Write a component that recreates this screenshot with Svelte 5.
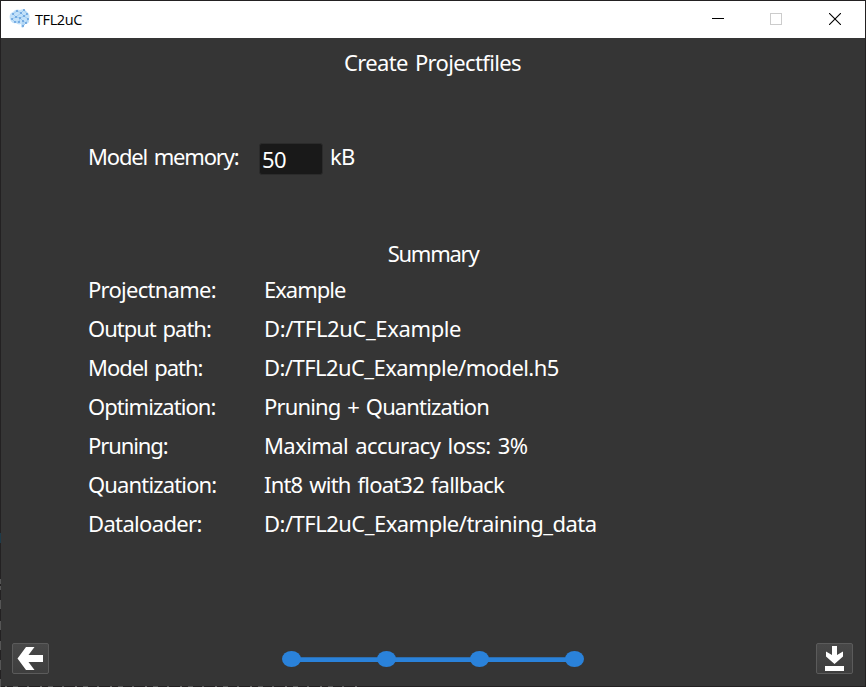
<script>
  const rows = [
    { label: 'Projectname:', value: 'Example', ls: -0.73, vs: -1 },
    { label: 'Output path:', value: 'D:/TFL2uC_Example', ls: -1, vs: -0.38 },
    { label: 'Model path:', value: 'D:/TFL2uC_Example/model.h5', ls: -1.05, vs: -0.56 },
    { label: 'Optimization:', value: 'Pruning + Quantization', ls: -0.95, vs: -0.86 },
    { label: 'Pruning:', value: 'Maximal accuracy loss: 3%', ls: -1.1, vs: -0.58 },
    { label: 'Quantization:', value: 'Int8 with float32 fallback', ls: -0.85, vs: -0.8 },
    { label: 'Dataloader:', value: 'D:/TFL2uC_Example/training_data', ls: -0.65, vs: -0.52 }
  ];
  const steps = [21.5, 116.5, 209.5, 304.5];
  const nodes = [
    [4, 6], [8, 3], [12, 5], [15, 2], [18, 6], [3, 11], [7, 9], [11, 10],
    [15, 8], [19, 11], [6, 14], [10, 14], [14, 13], [17, 15], [14, 18]
  ];
</script>

<div class="window">
  <header>
    <svg class="brain" width="22" height="22" viewBox="0 0 22 22">
      <path d="M1 11C0 8 1 5 4 4C6 1 9 1 11 2C14 0 17 2 18 4C21 6 21 9 20 11C21 14 19 16 16 16L14 20L12 19L12 16C10 17 8 16 7 15C4 16 2 14 1 11Z" fill="#c3e1f9" />
      <path d="M4 6L8 3L12 5L15 2L18 6L15 8L12 5L7 9L3 11L6 14L10 14L11 10L15 8L19 11L17 15L14 13L11 10L7 9L4 6M14 13L14 18L17 15" fill="none" stroke="#8fc3ee" stroke-width=".7" />
      {#each nodes as [x, y]}
        <circle cx={x} cy={y} r="1" fill="#659fdd" />
      {/each}
    </svg>
    <span class="title">TFL2uC</span>
    <div class="controls">
      <svg width="12" height="12" viewBox="0 0 12 12"><path d="M0 5.5H12" stroke="#000" /></svg>
      <svg width="12" height="12" viewBox="0 0 12 12"><rect x=".5" y=".5" width="11" height="11" fill="none" stroke="#ccc" /></svg>
      <svg class="close" width="12" height="12" viewBox="0 0 12 12"><path d="M0 0L12 12M12 0L0 12" stroke="#000" stroke-width="1.1" /></svg>
    </div>
  </header>

  <main>
    <h1>Create Projectfiles</h1>
    <div class="memory">
      <label for="mem">Model memory:</label>
      <input id="mem" value="50" />
      <span class="unit">kB</span>
    </div>
    <h2>Summary</h2>
    <div class="rows">
      {#each rows as r}
        <div class="row">
          <span class="label"><span style="letter-spacing:{r.ls}px">{r.label}</span></span>
          <span style="letter-spacing:{r.vs}px">{r.value}</span>
        </div>
      {/each}
    </div>
  </main>

  <footer>
    <button aria-label="Back">
      <svg width="36" height="30" viewBox="0 0 36 30"><path d="M4.5 14.5L13 3H21.500L15.500 11H30V18H15.500L21.500 26H13Z" fill="#fff" /></svg>
    </button>
    <svg class="steps" width="326" height="32" viewBox="0 0 326 32">
      <path d="M21.500 16.700H304.500" stroke="#2a82da" stroke-width="4.700" />
      {#each steps as x}
        <ellipse cx={x} cy="16" rx="9.500" ry="8" fill="#2a82da" />
      {/each}
    </svg>
    <button aria-label="Save">
      <svg width="36" height="30" viewBox="0 0 36 30"><path d="M15 2H20V11L26 7.500V12.500L17.500 20L9 12.500V7.500L15 11ZM8 22H27V27H8Z" fill="#fff" /></svg>
    </button>
  </footer>
</div>

<style>
  .window {
    position: relative;
    box-sizing: border-box;
    width: 866px;
    height: 687px;
    border: 1px solid #232122;
    background: #353535;
    color: #fff;
    font: 22px/30px "Noto Sans", sans-serif;
    word-spacing: 2px;
    font-variant-ligatures: none;
    display: flex;
    flex-direction: column;
    white-space: nowrap;
  }
  /* slivers of the desktop behind the window frame */
  .window::before {
    content: "";
    position: absolute;
    left: -1px;
    top: 532px;
    width: 1px;
    height: 154px;
    background: linear-gradient(#1d3b4a 0 10px, transparent 10px 46px, #555 46px 51px, transparent 51px 53px, #555 53px 57px, transparent 57px 67px, #555 67px 76px, transparent 76px 88px, #555 88px 97px, transparent 97px 108px, #555 108px 117px, transparent 117px 127px, #555 127px 137px, transparent 137px 146px, #555 146px);
  }
  .window::after {
    content: "";
    position: absolute;
    left: 4px;
    bottom: -1px;
    width: 354px;
    height: 1px;
    background: repeating-linear-gradient(90deg, #666 0 2px, transparent 2px 8px, #555 8px 13px, transparent 13px 22px, #5c5c5c 22px 24px, transparent 24px 35px);
  }
  header {
    height: 37px;
    flex: none;
    background: #fff;
    color: #000;
    display: flex;
    align-items: center;
    padding: 0 24px 0 8px;
  }
  .brain {
    margin-bottom: 1px;
  }
  .title {
    font: 14.500px/20px "Open Sans", sans-serif;
    letter-spacing: -0.4px;
    margin: 0 0 0 4px;
  }
  .controls {
    margin-left: auto;
    display: flex;
    gap: 46px;
    padding-bottom: 1px;
  }
  .close {
    margin-left: 1px;
  }
  svg {
    display: block;
  }
  main {
    flex: 1;
    display: flex;
    flex-direction: column;
  }
  h1, h2 {
    margin: 0;
    font: inherit;
    text-align: center;
  }
  h1 {
    padding: 9px 1px 0 0;
    letter-spacing: -0.64px;
  }
  .memory {
    display: flex;
    margin: 64px 0 0 87px;
    height: 33px;
  }
  .memory label {
    width: 171px;
    letter-spacing: -1.16px;
  }
  .unit {
    letter-spacing: -0.8px;
  }
  input {
    box-sizing: border-box;
    width: 64px;
    height: 32px;
    margin: 2px 7px 0 0;
    padding: 0 2px 0;
    border: 1px solid #2b2b2b;
    border-radius: 3px;
    background: #191919;
    color: #fff;
    font: inherit;
    letter-spacing: -0.5px;
  }
  h2 {
    margin-top: 64px;
    letter-spacing: -1.25px;
  }
  .rows {
    padding: 1px 0 0 87px;
  }
  .row {
    display: flex;
    height: 39px;
    align-items: center;
  }
  .label {
    width: 176px;
  }
  footer {
    display: flex;
    justify-content: space-between;
    align-items: flex-start;
    height: 43px;
    padding: 0 12px 0 11px;
  }
  button {
    box-sizing: border-box;
    width: 37px;
    height: 31px;
    padding: 0;
    border: 1px solid #5b5b5b;
    border-radius: 2px;
    background: linear-gradient(#484848, #3e3e3e);
    overflow: hidden;
  }
</style>
